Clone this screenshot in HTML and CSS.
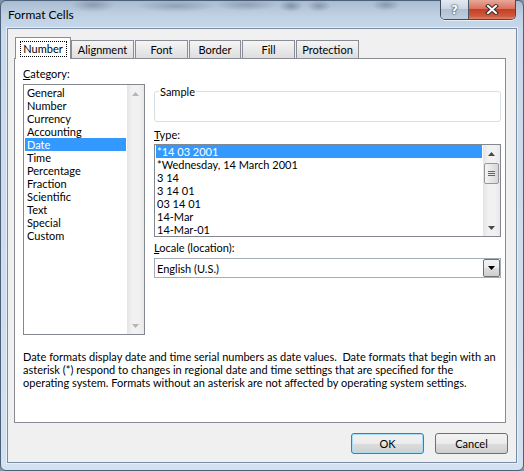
FILE: index.html
```html
<!DOCTYPE html>
<html lang="en">

<head>
    <meta charset="UTF-8">
    <title>Format Cells</title>
    <link rel="stylesheet" href="styles.css">
</head>

<body>
    <div class="window">
        <div class="titlebar">
            <span class="title">Format Cells</span>
            <div class="caption-btns">
                <span class="cap help">?</span>
                <span class="cap close">
                    <svg width="14" height="11" viewBox="0 0 14 11">
                        <path d="M3 2 L11 9 M11 2 L3 9" stroke="#3b2a28" stroke-width="4" stroke-linecap="square" fill="none" />
                        <path d="M3 2 L11 9 M11 2 L3 9" stroke="#ffffff" stroke-width="2" stroke-linecap="square" fill="none" />
                    </svg>
                </span>
            </div>
        </div>

        <div class="client">
            <div class="tabs">
                <span class="tab active"><span class="focus">Number</span></span>
                <span class="tab tab-align">Alignment</span>
                <span class="tab tab-font">Font</span>
                <span class="tab tab-border">Border</span>
                <span class="tab tab-fill">Fill</span>
                <span class="tab tab-prot">Protection</span>
            </div>

            <div class="panel">
                <div class="cols">
                    <div class="cat-col">
                        <div class="label"><u>C</u>ategory:</div>
                        <div class="listbox cat-list">
                            <ul class="items">
                                <li>General</li>
                                <li>Number</li>
                                <li>Currency</li>
                                <li>Accounting</li>
                                <li class="selected">Date</li>
                                <li>Time</li>
                                <li>Percentage</li>
                                <li>Fraction</li>
                                <li>Scientific</li>
                                <li>Text</li>
                                <li>Special</li>
                                <li>Custom</li>
                            </ul>
                            <div class="vscroll disabled">
                                <span class="arrow">
                                    <svg width="7" height="4" viewBox="0 0 7 4"><path d="M0 4 L3.5 0 L7 4 Z" /></svg>
                                </span>
                                <span class="track"></span>
                                <span class="arrow">
                                    <svg width="7" height="4" viewBox="0 0 7 4"><path d="M0 0 L7 0 L3.5 4 Z" /></svg>
                                </span>
                            </div>
                        </div>
                    </div>

                    <div class="fmt-col">
                        <fieldset class="sample">
                            <legend>Sample</legend>
                            <div class="sample-body"></div>
                        </fieldset>

                        <div class="label type-label"><u>T</u>ype:</div>
                        <div class="listbox type-list">
                            <ul class="items">
                                <li class="selected">*14 03 2001</li>
                                <li>*Wednesday, 14 March 2001</li>
                                <li>3 14</li>
                                <li>3 14 01</li>
                                <li>03 14 01</li>
                                <li>14-Mar</li>
                                <li>14-Mar-01</li>
                            </ul>
                            <div class="vscroll">
                                <span class="arrow">
                                    <svg width="7" height="4" viewBox="0 0 7 4"><path d="M0 4 L3.5 0 L7 4 Z" /></svg>
                                </span>
                                <span class="track">
                                    <span class="thumb">
                                        <svg width="7" height="7" viewBox="0 0 7 7">
                                            <path d="M0 1.5 H7 M0 3.5 H7 M0 5.5 H7" stroke="#5d6570" stroke-width="1" />
                                        </svg>
                                    </span>
                                </span>
                                <span class="arrow">
                                    <svg width="7" height="4" viewBox="0 0 7 4"><path d="M0 0 L7 0 L3.5 4 Z" /></svg>
                                </span>
                            </div>
                        </div>

                        <div class="label locale-label"><u>L</u>ocale (location):</div>
                        <div class="combo">
                            <span class="combo-text">English (U.S.)</span>
                            <span class="combo-btn">
                                <svg width="7" height="4" viewBox="0 0 7 4"><path d="M0 0 L7 0 L3.5 4 Z" /></svg>
                            </span>
                        </div>
                    </div>
                </div>

                <p class="desc">
                    Date formats display date and time serial numbers as date values.&nbsp; Date formats that begin with an<br>
                    asterisk (*) respond to changes in regional date and time settings that are specified for the<br>
                    operating system. Formats without an asterisk are not affected by operating system settings.
                </p>
            </div>

            <div class="buttons">
                <button class="btn default">OK</button>
                <button class="btn">Cancel</button>
            </div>
        </div>
    </div>
</body>

</html>
```

FILE: styles.css
```css
html,
body {
    margin: 0;
    overflow: hidden;
    height: 100%;
    width: 100%;
}

body {
    font-family: "Lato", "Noto Sans", sans-serif;
    font-size: 11px;
    color: #000;
    background-color: #7f93ab;
}

/* window frame (aero glass) */
.window {
    width: 524px;
    height: 471px;
    box-sizing: border-box;
    display: flex;
    flex-direction: column;
    padding: 0 6px 7px 6px;
    border: 1px solid #4d6079;
    border-radius: 6px;
    background:
        radial-gradient(ellipse 22px 7px at 92px 4px, rgba(70, 86, 108, 0.35), transparent),
        radial-gradient(ellipse 40px 6px at 175px 5px, rgba(70, 86, 108, 0.3), transparent),
        radial-gradient(ellipse 30px 6px at 245px 4px, rgba(70, 86, 108, 0.3), transparent),
        radial-gradient(ellipse 12px 6px at 290px 5px, rgba(60, 76, 98, 0.4), transparent),
        radial-gradient(ellipse 12px 6px at 318px 5px, rgba(60, 76, 98, 0.35), transparent),
        radial-gradient(ellipse 14px 6px at 385px 4px, rgba(60, 76, 98, 0.35), transparent),
        linear-gradient(to bottom, #a9bbd0 0, #bfd0e3 14px, #c9daec 30px, #d3e1f0 100%);
}

.titlebar {
    height: 27px;
    display: flex;
    justify-content: space-between;
    align-items: flex-start;
}

.title {
    padding-left: 1px;
    line-height: 28px;
    font-size: 12px;
    color: #000;
}

.caption-btns {
    display: flex;
    margin-top: -1px;
    margin-right: 1px;
    border: 1px solid #3e4b5c;
    border-top: none;
    border-radius: 0 0 5px 5px;
    overflow: hidden;
    box-shadow: 0 1px 0 rgba(255, 255, 255, 0.6);
}

.cap {
    height: 19px;
    display: flex;
    align-items: center;
    justify-content: center;
}

.help {
    width: 27px;
    border-right: 1px solid #4a586a;
    background: linear-gradient(#e3e9f1 0, #cbd5e2 45%, #b2c0d1 50%, #c2cedc 100%);
    color: #fff;
    font-family: "DejaVu Sans", sans-serif;
    font-weight: bold;
    font-size: 12px;
    line-height: 12px;
    text-shadow: 0 0 2px #2c3a4a, 0 0 1px #2c3a4a;
}

.close {
    width: 46px;
    background: linear-gradient(#e9a899 0, #d9735e 45%, #c63e24 50%, #cf5a3d 85%, #e0866c 100%);
}

/* dialog client area */
.client {
    flex: 1;
    display: flex;
    flex-direction: column;
    border: 1px solid #7a8ca3;
    background-color: #f0f0f0;
    padding: 8px 8px 8px 6px;
    box-shadow: 0 0 0 1px rgba(240, 246, 252, 0.7);
}

.tabs {
    display: flex;
    align-items: flex-end;
    height: 22px;
    margin-bottom: -1px;
    position: relative;
    z-index: 1;
}

.tab {
    box-sizing: border-box;
    height: 18px;
    margin-bottom: 1px;
    margin-left: 1px;
    border: 1px solid #898c95;
    border-bottom: none;
    background: linear-gradient(#f5f5f5, #e9e9e9 50%, #dedede);
    text-align: center;
    line-height: 17px;
}

.tab.active {
    width: 56px;
    height: 22px;
    margin-bottom: 0;
    margin-left: 1px;
    padding-top: 2px;
    background: #fff;
}

.focus {
    display: inline-block;
    width: 47px;
    height: 16px;
    line-height: 14px;
    box-sizing: border-box;
    border: 1px dotted #000;
}

.tab.active + .tab {
    margin-left: 0;
}

.tab-align { width: 63px; }
.tab-font { width: 53px; }
.tab-border { width: 52px; }
.tab-fill { width: 53px; }
.tab-prot { width: 63px; }

.panel {
    box-sizing: border-box;
    height: 365px;
    margin-right: 2px;
    padding: 8px 4px 0 8px;
    border: 1px solid #898c95;
    background-color: #fff;
}

.cols {
    display: flex;
    gap: 9px;
}

.cat-col {
    width: 122px;
}

.fmt-col {
    width: 347px;
}

.label {
    height: 13px;
    line-height: 13px;
}

/* list boxes */
.listbox {
    box-sizing: border-box;
    display: flex;
    border: 1px solid #828790;
    background-color: #fff;
}

.cat-list {
    margin-top: 4px;
    height: 251px;
}

.items {
    flex: 1;
    list-style: none;
    margin: 0;
    padding: 1px 1px 0 1px;
}

.items li {
    height: 13px;
    line-height: 13px;
    padding-left: 2px;
    white-space: nowrap;
}

.items li.selected {
    background-color: #3399ff;
    color: #fff;
}

.type-list .items {
    padding-top: 0;
}

.type-list .items li {
    padding-left: 1px;
}

.vscroll {
    width: 17px;
    display: flex;
    flex-direction: column;
    background: linear-gradient(to right, #e4e4e4, #f1f1f1 30%, #f1f1f1 70%, #e8e8e8);
}

.vscroll .arrow {
    height: 17px;
    display: flex;
    align-items: center;
    justify-content: center;
}

.vscroll .arrow svg {
    fill: #4a4a4a;
}

.vscroll.disabled .arrow svg {
    fill: #b5b5b5;
}

.vscroll .track {
    flex: 1;
}

.thumb {
    box-sizing: border-box;
    display: flex;
    align-items: center;
    justify-content: center;
    height: 21px;
    margin: 1px 1px 0 1px;
    border: 1px solid #979797;
    border-radius: 2px;
    background: linear-gradient(to right, #f4f4f4, #e6e6e6 50%, #d6d6d6);
}

/* sample group */
.sample {
    margin: 18px 0 0 0;
    padding: 0 4px;
    border: 1px solid #d5dfe5;
    border-radius: 3px;
}

.sample legend {
    padding: 0 1px;
    margin-left: 0;
    line-height: 13px;
}

.sample-body {
    height: 23px;
}

.type-label {
    margin-top: 6px;
}

.type-list {
    margin-top: 3px;
    height: 93px;
}

.locale-label {
    margin-top: 4px;
}

.combo {
    box-sizing: border-box;
    display: flex;
    align-items: center;
    height: 20px;
    margin-top: 4px;
    border: 1px solid #a5acb5;
    background-color: #fff;
}

.combo-text {
    flex: 1;
    padding-left: 2px;
}

.combo-btn {
    box-sizing: border-box;
    width: 17px;
    height: 18px;
    display: flex;
    align-items: center;
    justify-content: center;
    border: 1px solid #707070;
    border-radius: 2px;
    background: linear-gradient(#f2f2f2, #ebebeb 50%, #dddddd 50%, #cfcfcf);
}

.combo-btn svg {
    fill: #000;
}

.desc {
    margin: 15px 0 0 0;
    line-height: 13px;
    white-space: nowrap;
}

/* bottom buttons */
.buttons {
    display: flex;
    justify-content: flex-end;
    gap: 11px;
    margin-top: 10px;
}

.btn {
    width: 73px;
    height: 21px;
    padding: 0;
    font-family: inherit;
    font-size: 11px;
    color: #000;
    border: 1px solid #707070;
    border-radius: 3px;
    background: linear-gradient(#f2f2f2, #ebebeb 50%, #dddddd 50%, #cfcfcf);
}

.btn.default {
    border-color: #3c7fb1;
    box-shadow: inset 0 0 0 1px #a9dcf5;
}
```
